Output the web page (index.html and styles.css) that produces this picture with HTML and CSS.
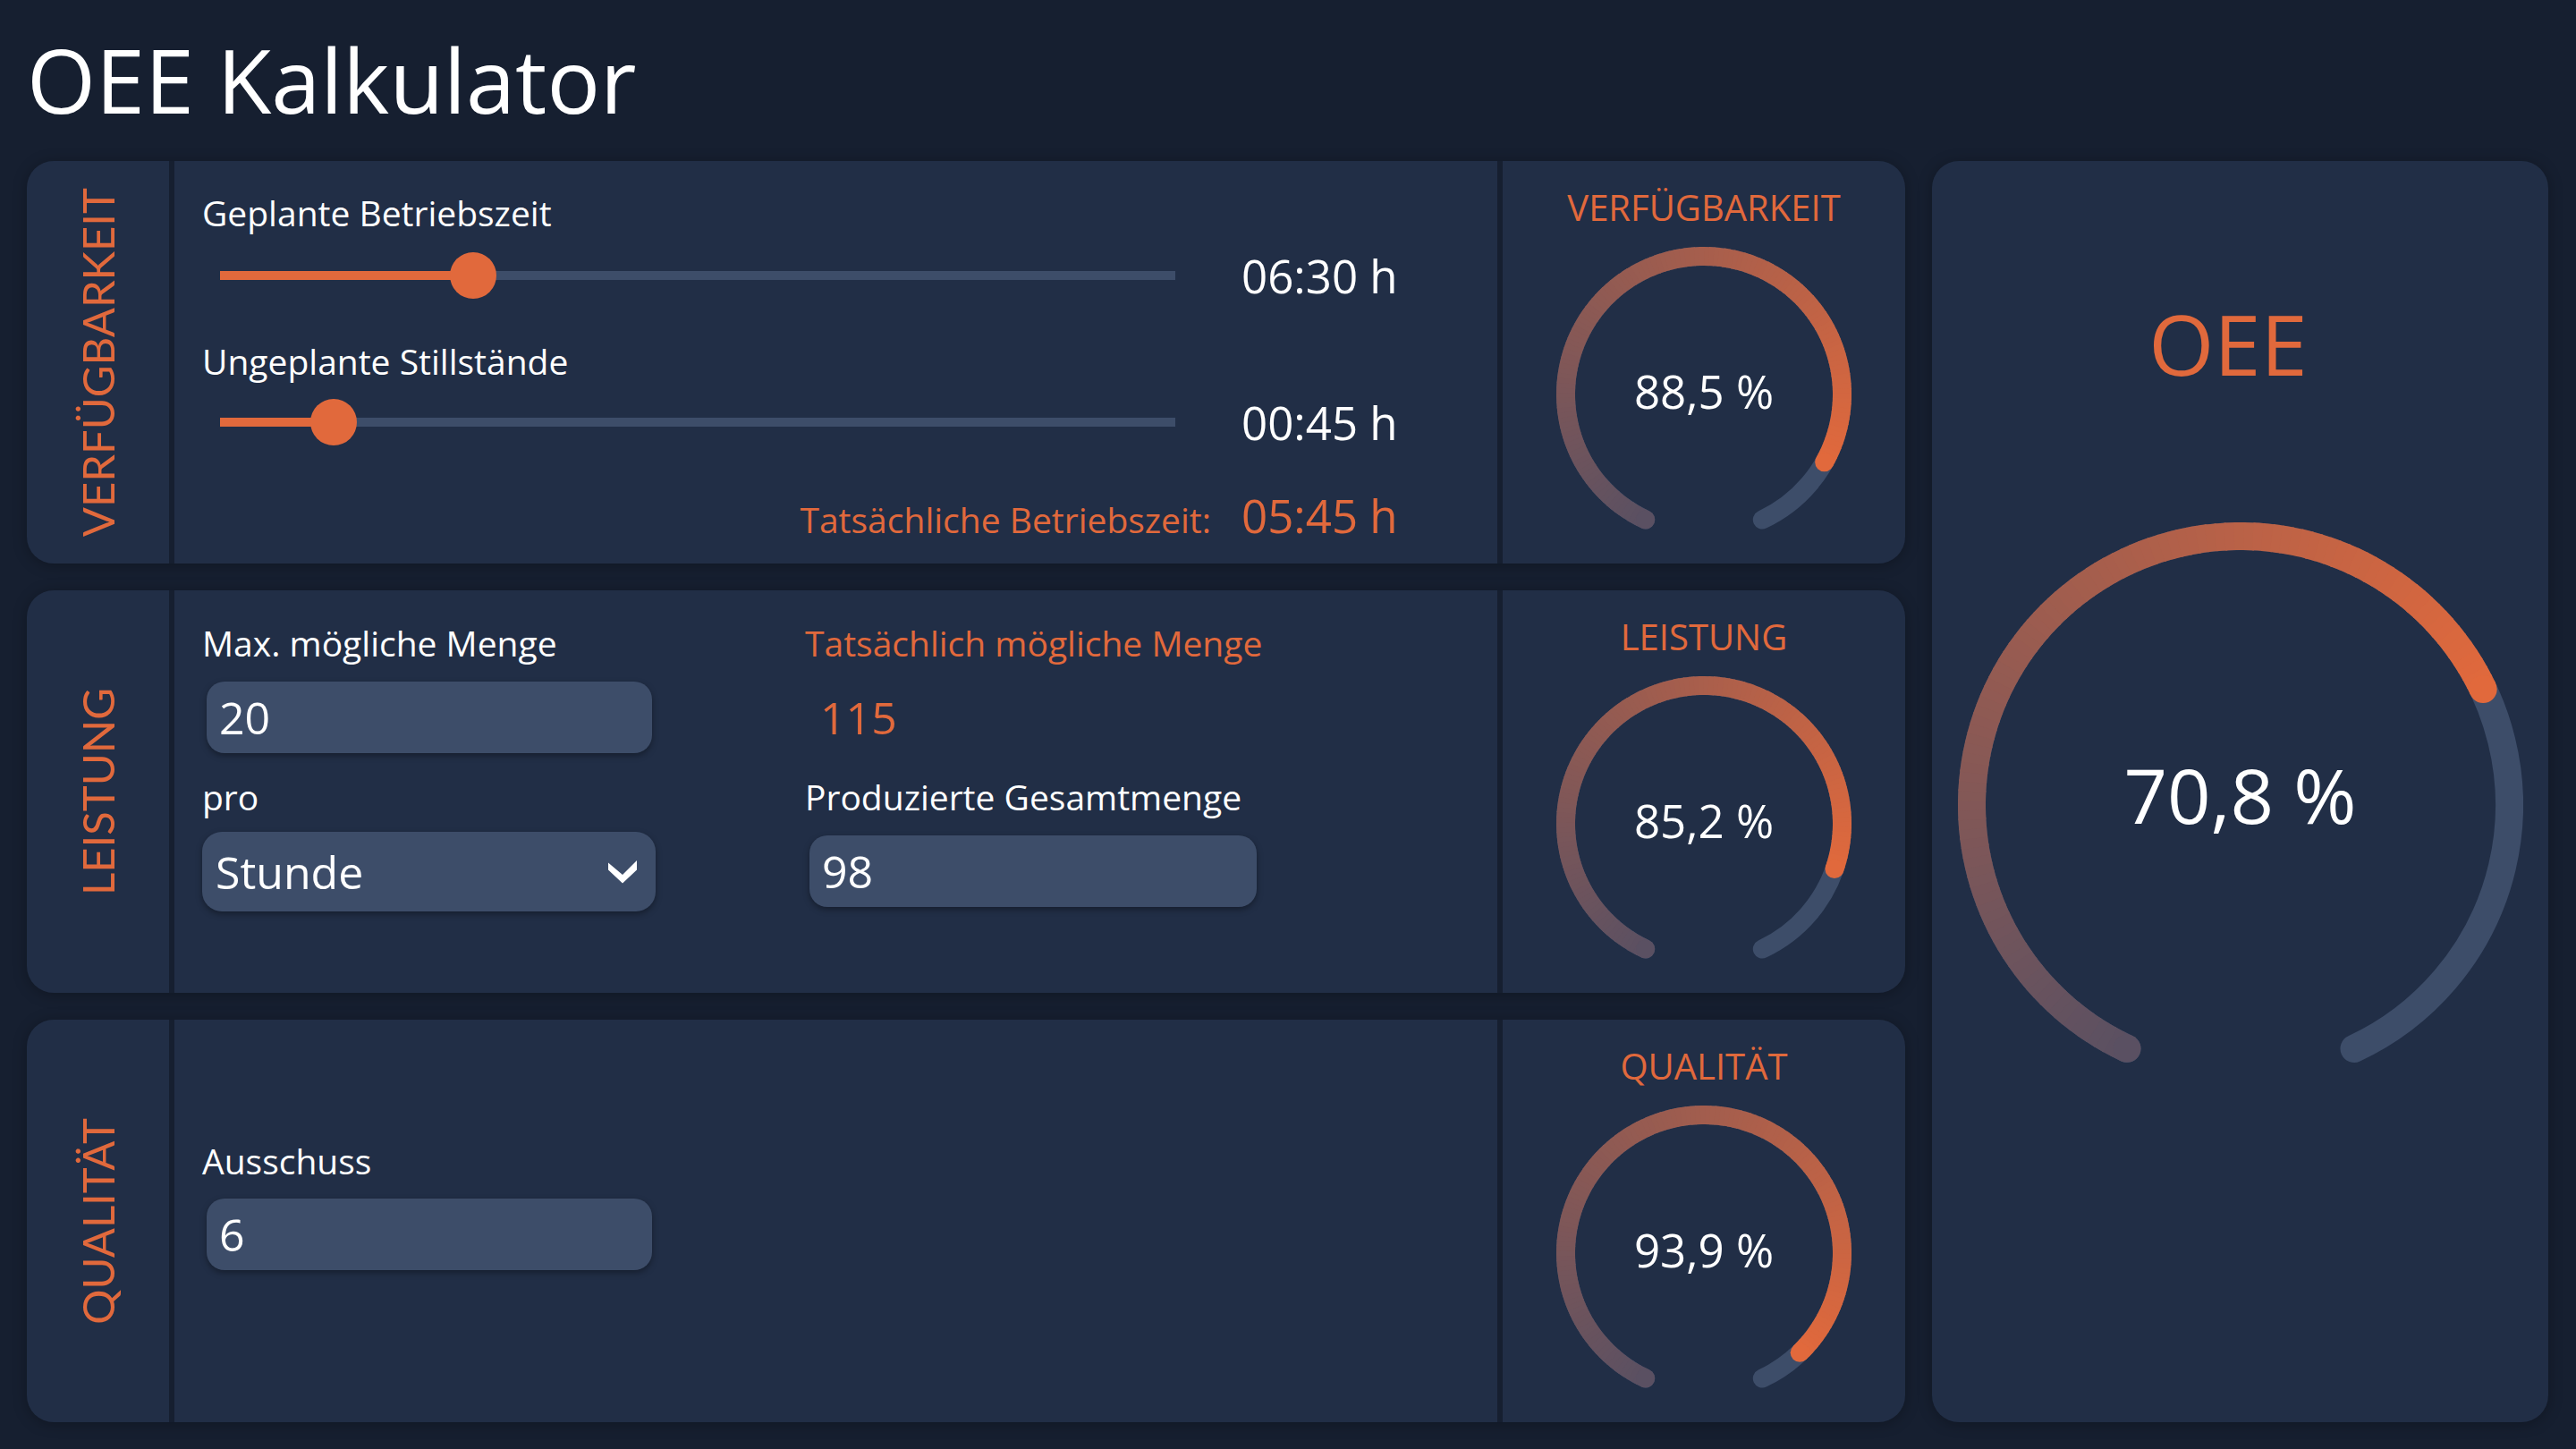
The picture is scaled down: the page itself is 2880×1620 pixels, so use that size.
FILE: index.html
```html
<!DOCTYPE html>
<html lang="de">
<head>
<meta charset="utf-8">
<title>OEE Kalkulator</title>
<link rel="stylesheet" href="styles.css">
</head>
<body>
<div class="page">
  <h1 class="title">OEE Kalkulator</h1>
  <div class="layout">
    <div class="cards">
      <section class="card">
        <div class="side"><span class="side-label">VERFÜGBARKEIT</span></div>
        <div class="body body-avail">
          <div class="label">Geplante Betriebszeit</div>
          <div class="slider-row">
            <div class="slider" style="--p:26.5%"><div class="track"></div><div class="fill"></div><div class="thumb"></div></div>
            <div class="value">06:30 h</div>
          </div>
          <div class="label label-second">Ungeplante Stillstände</div>
          <div class="slider-row slider-row-second">
            <div class="slider" style="--p:11.9%"><div class="track"></div><div class="fill"></div><div class="thumb"></div></div>
            <div class="value">00:45 h</div>
          </div>
          <div class="result-row">
            <div class="result-label">Tatsächliche Betriebszeit:</div>
            <div class="value value-accent">05:45 h</div>
          </div>
        </div>
        <div class="gauge-panel">
          <div class="gauge-title">VERFÜGBARKEIT</div>
          <div class="gauge" data-value="0.885" data-size="330" data-stroke="21">
            <div class="gauge-value">88,5 %</div>
          </div>
        </div>
      </section>

      <section class="card">
        <div class="side"><span class="side-label">LEISTUNG</span></div>
        <div class="body body-perf">
          <div class="col">
            <div class="label">Max. mögliche Menge</div>
            <input class="field field-first" type="text" value="20">
            <div class="label label-gap">pro</div>
            <div class="select">
              <span>Stunde</span>
              <svg class="chevron" viewBox="0 0 32 26" width="32" height="26"><polygon points="0,2.5 16,16 32,0 32,10.5 16,25.5 0,10.5" fill="#ffffff"/></svg>
            </div>
          </div>
          <div class="col">
            <div class="label label-accent">Tatsächlich mögliche Menge</div>
            <div class="readout">115</div>
            <div class="label label-gap">Produzierte Gesamtmenge</div>
            <input class="field field-late" type="text" value="98">
          </div>
        </div>
        <div class="gauge-panel">
          <div class="gauge-title">LEISTUNG</div>
          <div class="gauge" data-value="0.852" data-size="330" data-stroke="21">
            <div class="gauge-value">85,2 %</div>
          </div>
        </div>
      </section>

      <section class="card">
        <div class="side"><span class="side-label">QUALITÄT</span></div>
        <div class="body body-qual">
          <div class="label">Ausschuss</div>
          <input class="field field-first" type="text" value="6">
        </div>
        <div class="gauge-panel">
          <div class="gauge-title">QUALITÄT</div>
          <div class="gauge" data-value="0.939" data-size="330" data-stroke="21">
            <div class="gauge-value">93,9 %</div>
          </div>
        </div>
      </section>
    </div>

    <section class="oee">
      <div class="oee-title">OEE</div>
      <div class="gauge gauge-big" data-value="0.708" data-size="632" data-stroke="31">
        <div class="gauge-value gauge-value-big">70,8 %</div>
      </div>
    </section>
  </div>
</div>
<script src="script.js"></script>
</body>
</html>
```

FILE: styles.css
```css
* { box-sizing: border-box; }

html, body {
  margin: 0;
  padding: 0;
}

body {
  background: #161f30;
  color: #ffffff;
  font-family: "Open Sans", "Noto Sans", sans-serif;
  font-weight: 400;
}

.page {
  width: 2880px;
  height: 1620px;
  padding: 0 31px 30px 30px;
  display: flex;
  flex-direction: column;
}

.title {
  margin: 0;
  height: 180px;
  padding-top: 39px;
  font-size: 99px;
  line-height: 99px;
  font-weight: 400;
}

.layout {
  display: grid;
  grid-template-columns: 2100px 689px;
  column-gap: 30px;
  height: 1410px;
}

.cards {
  display: flex;
  flex-direction: column;
  gap: 30px;
}

.card {
  display: flex;
  gap: 6px;
  height: 450px;
  border-radius: 30px;
  box-shadow: 0 2px 16px rgba(0, 0, 0, 0.28);
}

.side,
.body,
.gauge-panel,
.oee {
  background: #212e46;
}

.side {
  width: 159px;
  flex: none;
  border-radius: 30px 0 0 30px;
  display: flex;
  align-items: center;
  justify-content: center;
}

.side-label {
  writing-mode: vertical-rl;
  transform: rotate(180deg);
  font-family: "Lato", "Open Sans", sans-serif;
  font-weight: 400;
  font-size: 49px;
  line-height: 1;
  color: #e1693c;
}

.body {
  flex: 1;
  padding-left: 31px;
}

.label {
  font-size: 39px;
  line-height: 39px;
  white-space: nowrap;
}

.label-accent { color: #e1693c; }

/* Verfügbarkeit */
.body-avail { padding-top: 38px; }

.slider-row {
  display: grid;
  grid-template-columns: 1162px auto;
  align-items: center;
  height: 52px;
  margin-top: 25px;
}

.label-second { margin-top: 50px; }
.slider-row-second { margin-top: 23px; }

.slider {
  position: relative;
  width: 1068px;
  height: 52px;
  margin-left: 20px;
}

.track {
  position: absolute;
  left: 0;
  right: 0;
  top: 21px;
  height: 10px;
  background: #3d4d69;
}

.fill {
  position: absolute;
  left: 0;
  top: 21px;
  height: 10px;
  width: var(--p);
  background: #e1693c;
}

.thumb {
  position: absolute;
  top: 0;
  left: calc(var(--p) - 26px);
  width: 52px;
  height: 52px;
  border-radius: 50%;
  background: #e1693c;
}

.value {
  font-size: 51px;
  line-height: 52px;
  white-space: nowrap;
}

.value-accent { color: #e1693c; }

.result-row {
  display: grid;
  grid-template-columns: 1162px auto;
  align-items: baseline;
  margin-top: 52px;
}

.result-label {
  text-align: right;
  padding-right: 34px;
  font-size: 39px;
  color: #e1693c;
  white-space: nowrap;
}

/* Leistung */
.body-perf {
  padding-top: 39px;
  display: grid;
  grid-template-columns: 507px 507px;
  column-gap: 167px;
  align-content: start;
}

.col {
  display: flex;
  flex-direction: column;
  align-items: flex-start;
}

.label-gap { margin-top: 29px; }

.field {
  display: block;
  width: 498px;
  height: 80px;
  margin: 24px 0 0 5px;
  padding: 0 0 0 14px;
  border: none;
  outline: none;
  border-radius: 20px;
  background: #3d4d69;
  color: #ffffff;
  font-family: "Open Sans", "Noto Sans", sans-serif;
  font-size: 50px;
  box-shadow: 0 3px 7px rgba(0, 0, 0, 0.35);
}

.field-late {
  width: 500px;
  margin-top: 24px;
}

.readout {
  height: 80px;
  margin-top: 24px;
  padding-left: 17px;
  display: flex;
  align-items: center;
  font-size: 50px;
  color: #e1693c;
}

.select {
  width: 507px;
  height: 89px;
  margin-top: 20px;
  padding: 0 21px 0 15px;
  border-radius: 22px;
  background: #3d4d69;
  display: flex;
  align-items: center;
  justify-content: space-between;
  font-size: 50px;
  box-shadow: 0 3px 7px rgba(0, 0, 0, 0.35);
}

.chevron { display: block; }

/* Qualität */
.body-qual { padding-top: 138px; }
.body-qual .field { margin-top: 23px; }

/* Gauge panels */
.gauge-panel {
  width: 450px;
  flex: none;
  border-radius: 0 30px 30px 0;
  display: flex;
  flex-direction: column;
  align-items: center;
  padding-top: 32px;
}

.gauge-title {
  font-size: 40px;
  line-height: 40px;
  color: #e1693c;
  white-space: nowrap;
}

.gauge {
  position: relative;
  width: 330px;
  height: 330px;
  margin-top: 24px;
}

.gauge svg {
  display: block;
}

.gauge-value {
  position: absolute;
  inset: 0;
  display: flex;
  align-items: center;
  justify-content: center;
  padding-bottom: 8px;
  font-size: 51px;
  line-height: 51px;
  white-space: nowrap;
}

/* OEE card */
.oee {
  border-radius: 30px;
  box-shadow: 0 2px 16px rgba(0, 0, 0, 0.28);
  display: flex;
  flex-direction: column;
  align-items: center;
  padding-top: 157px;
}

.oee-title {
  font-size: 94px;
  line-height: 94px;
  color: #e1693c;
  margin-right: 27px;
}

.gauge-big {
  width: 632px;
  height: 632px;
  margin-top: 153px;
}

.gauge-value-big {
  font-size: 85px;
  line-height: 85px;
  padding-bottom: 23px;
}
```

FILE: script.js
```js
(function () {
  var NS = 'http://www.w3.org/2000/svg';
  var START = [90, 80, 98];
  var END = [225, 105, 60];
  var TRACK = '#3d4d69';

  function mix(t) {
    var c = [];
    for (var i = 0; i < 3; i++) c.push(Math.round(START[i] + (END[i] - START[i]) * t));
    return 'rgb(' + c.join(',') + ')';
  }

  document.querySelectorAll('.gauge').forEach(function (g) {
    var v = parseFloat(g.getAttribute('data-value'));
    var size = parseFloat(g.getAttribute('data-size'));
    var sw = parseFloat(g.getAttribute('data-stroke'));
    var c = size / 2;
    var r = (size - sw) / 2;
    var a0 = -155;
    var sweep = 310;

    function pt(a) {
      var rad = a * Math.PI / 180;
      return [c + r * Math.sin(rad), c - r * Math.cos(rad)];
    }
    function arc(a1, a2) {
      var p1 = pt(a1), p2 = pt(a2);
      var large = (a2 - a1) > 180 ? 1 : 0;
      return 'M' + p1[0].toFixed(2) + ' ' + p1[1].toFixed(2) +
        ' A' + r + ' ' + r + ' 0 ' + large + ' 1 ' + p2[0].toFixed(2) + ' ' + p2[1].toFixed(2);
    }
    function path(d, color, cap) {
      var p = document.createElementNS(NS, 'path');
      p.setAttribute('d', d);
      p.setAttribute('fill', 'none');
      p.setAttribute('stroke', color);
      p.setAttribute('stroke-width', sw);
      p.setAttribute('stroke-linecap', cap);
      return p;
    }
    function dot(a, color) {
      var p = pt(a);
      var e = document.createElementNS(NS, 'circle');
      e.setAttribute('cx', p[0]);
      e.setAttribute('cy', p[1]);
      e.setAttribute('r', sw / 2);
      e.setAttribute('fill', color);
      return e;
    }

    var svg = document.createElementNS(NS, 'svg');
    svg.setAttribute('viewBox', '0 0 ' + size + ' ' + size);
    svg.setAttribute('width', size);
    svg.setAttribute('height', size);

    svg.appendChild(path(arc(a0, a0 + sweep), TRACK, 'round'));

    var end = a0 + sweep * v;
    var n = Math.max(2, Math.ceil((end - a0) / 2));
    for (var i = 0; i < n; i++) {
      var s = a0 + (end - a0) * i / n;
      var e = Math.min(end, a0 + (end - a0) * (i + 1) / n + 0.4);
      svg.appendChild(path(arc(s, e), mix((i + 0.5) / n), 'butt'));
    }
    svg.appendChild(dot(a0, mix(0)));
    svg.appendChild(dot(end, mix(1)));

    g.insertBefore(svg, g.firstChild);
  });
})();
```
